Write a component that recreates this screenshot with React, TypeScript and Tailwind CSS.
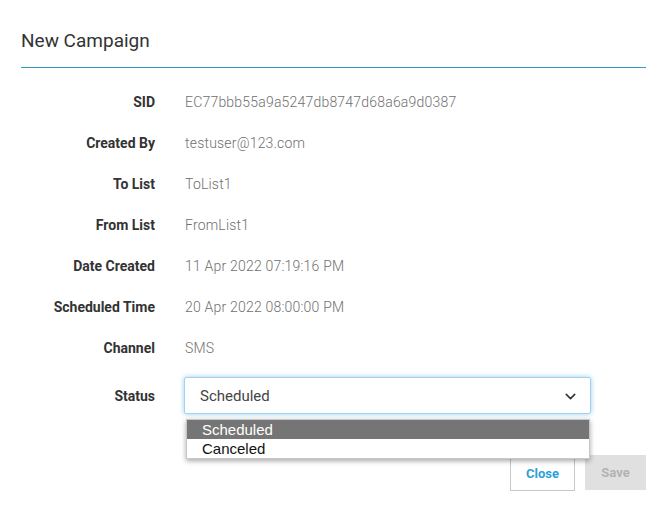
import { ChevronDown } from "lucide-react";

const rows = [
  { label: "SID", value: "EC77bbb55a9a5247db8747d68a6a9d0387" },
  { label: "Created By", value: "testuser@123.com" },
  { label: "To List", value: "ToList1" },
  { label: "From List", value: "FromList1" },
  { label: "Date Created", value: "11 Apr 2022 07:19:16 PM" },
  { label: "Scheduled Time", value: "20 Apr 2022 08:00:00 PM" },
  { label: "Channel", value: "SMS" },
];

export default function App() {
  return (
    <div
      className="w-[669px] h-[505px] bg-white overflow-hidden"
      style={{ fontFamily: "Roboto, 'Liberation Sans', sans-serif" }}
    >
      <div className="px-[21px]">
        <div className="h-[67px] flex items-center pt-[13px]">
          <h1 className="text-[19px] text-[#333] leading-none">New Campaign</h1>
        </div>
        <div className="h-px bg-[#3399cc] mr-[2px]"></div>

        <div className="flex flex-col mt-[14px]">
          {rows.map((r) => (
            <div key={r.label} className="flex items-center h-[41px]">
              <p className="w-[134px] text-right text-[14px] font-bold text-[#333]">
                {r.label}
              </p>
              <p className="ml-[30px] text-[14px] text-[#707070] font-light tracking-[0.2px]">
                {r.value}
              </p>
            </div>
          ))}

          <div className="flex items-center mt-[8px] h-[37px]">
            <p className="w-[134px] text-right text-[14px] font-bold text-[#333] pt-[2px]">
              Status
            </p>
            <div className="relative ml-[29px] w-[407px]">
              <div className="h-[37px] flex items-center justify-between pl-[15px] pr-[11px] border border-[#9fd3ee] rounded-[2px] shadow-[0_0_5px_rgba(80,170,230,0.6)] bg-white">
                <span className="text-[15px] text-[#444] pt-[2px]">Scheduled</span>
                <ChevronDown size={17} strokeWidth={2.2} className="text-[#333] mt-[2px]" />
              </div>
              <div
                className="absolute left-[2px] right-[1px] top-[42px] bg-white border border-[#c8c8c8] shadow-[0_2px_5px_rgba(0,0,0,0.35)] text-[15px] leading-[19px] z-10"
                style={{ fontFamily: "'Liberation Sans', Arial, sans-serif" }}
              >
                <div className="bg-[#757575] text-white pl-[15px]">Scheduled</div>
                <div className="text-[#111] pl-[15px]">Canceled</div>
              </div>
            </div>
          </div>
        </div>

        <div className="flex justify-end gap-[10px] mt-[42px] mr-[2px]">
          <button className="w-[65px] h-[35px] border border-[#c8c8c8] bg-white text-[#2d9fd9] text-[13px] font-bold">
            Close
          </button>
          <button className="w-[61px] h-[35px] bg-[#e0e0e0] text-[#b3b3b3] text-[13px] font-bold -mt-px">
            Save
          </button>
        </div>
      </div>
    </div>
  );
}
